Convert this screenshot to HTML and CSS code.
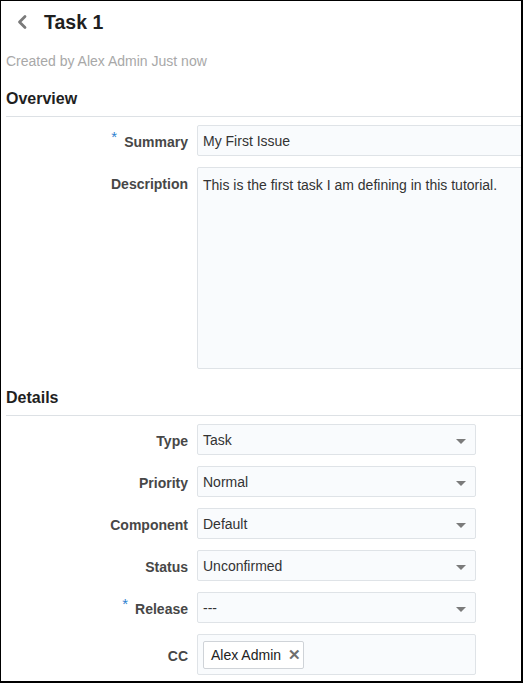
FILE: index.html
```html
<!DOCTYPE html>
<html>
<head>
<meta charset="utf-8">
<link rel="stylesheet" href="styles.css">
</head>
<body>
<div class="frame">
  <header class="topbar">
    <svg class="back" width="12" height="16" viewBox="0 0 12 16"><path d="M9 2.5 L3.5 8 L9 13.5" fill="none" stroke="#7a7a7a" stroke-width="2.8" stroke-linecap="round" stroke-linejoin="round"/></svg>
    <h1 class="title">Task 1</h1>
  </header>
  <div class="meta">Created by Alex Admin Just now</div>

  <h2 class="section">Overview</h2>
  <div class="form">
    <div class="row">
      <label class="lbl"><span class="req">*</span>Summary</label>
      <div class="ctl wide">My First Issue</div>
    </div>
    <div class="row row-top">
      <label class="lbl">Description</label>
      <div class="ctl wide area">This is the first task I am defining in this tutorial.</div>
    </div>
  </div>

  <h2 class="section details">Details</h2>
  <div class="form">
    <div class="row">
      <label class="lbl">Type</label>
      <div class="ctl sel">Task<span class="arrow"></span></div>
    </div>
    <div class="row">
      <label class="lbl">Priority</label>
      <div class="ctl sel">Normal<span class="arrow"></span></div>
    </div>
    <div class="row">
      <label class="lbl">Component</label>
      <div class="ctl sel">Default<span class="arrow"></span></div>
    </div>
    <div class="row">
      <label class="lbl">Status</label>
      <div class="ctl sel">Unconfirmed<span class="arrow"></span></div>
    </div>
    <div class="row">
      <label class="lbl"><span class="req">*</span>Release</label>
      <div class="ctl sel">---<span class="arrow"></span></div>
    </div>
    <div class="row">
      <label class="lbl">CC</label>
      <div class="ctl sel cc"><span class="chip">Alex Admin<span class="x">✕</span></span></div>
    </div>
  </div>
</div>
</body>
</html>
```

FILE: styles.css
```css
html, body {
  margin: 0;
  padding: 0;
  background: #fff;
}
.frame {
  width: 523px;
  height: 683px;
  box-sizing: border-box;
  border-style: solid;
  border-color: #000;
  border-width: 1px 2px 2px 1px;
  overflow: hidden;
  font-family: "Liberation Sans", Arial, sans-serif;
  font-size: 14px;
  color: #333;
}
.topbar {
  height: 42px;
  display: flex;
  align-items: center;
  padding-left: 15px;
}
.back {
  display: block;
}
.title {
  margin: 0 0 0 16px;
  font-size: 19.5px;
  font-weight: bold;
  color: #1f1f1f;
  line-height: 24px;
}
.meta {
  margin-top: 8px;
  padding-left: 5px;
  line-height: 20px;
  color: #a8a8a8;
}
.section {
  margin: 18px 0 0 5px;
  padding-bottom: 7px;
  line-height: 20px;
  font-size: 16px;
  font-weight: bold;
  color: #1f1f1f;
  border-bottom: 1px solid #dde1e5;
}
.section.details {
  margin-top: 19px;
}
.form {
  margin-top: 8px;
  display: grid;
  row-gap: 11px;
}
.row {
  display: grid;
  grid-template-columns: 187px 360px;
  column-gap: 9px;
  align-items: center;
}
.row-top {
  align-items: start;
}
.lbl {
  text-align: right;
  font-weight: bold;
  color: #474747;
  line-height: 20px;
  white-space: nowrap;
  padding-top: 2px;
}
.row-top .lbl {
  padding-top: 7px;
}
.req {
  color: #2f82d0;
  font-weight: normal;
  font-size: 15px;
  position: relative;
  top: -5px;
  margin-right: 7px;
}
.ctl {
  box-sizing: border-box;
  height: 31px;
  border: 1px solid #dfe3e7;
  border-radius: 2px;
  background: #f9fbfd;
  padding: 1px 0 0 5px;
  display: flex;
  align-items: center;
  color: #333;
  position: relative;
  white-space: nowrap;
}
.wide {
  width: 345px;
}
.area {
  height: 202px;
  align-items: flex-start;
  padding-top: 7px;
  line-height: 20px;
}
.sel {
  width: 279px;
}
.arrow {
  position: absolute;
  right: 9px;
  top: 14px;
  width: 0;
  height: 0;
  border-left: 5px solid transparent;
  border-right: 5px solid transparent;
  border-top: 5px solid #7b7b7b;
}
.cc {
  height: 41px;
  padding-top: 0;
}
.chip {
  box-sizing: border-box;
  height: 28px;
  width: 101px;
  border: 1px solid #cfd3d8;
  border-radius: 2px;
  background: #fff;
  display: flex;
  align-items: center;
  padding-left: 7px;
  color: #222;
}
.x {
  margin-left: 7px;
  color: #6e6e6e;
  font-size: 15px;
  font-weight: bold;
}
```
